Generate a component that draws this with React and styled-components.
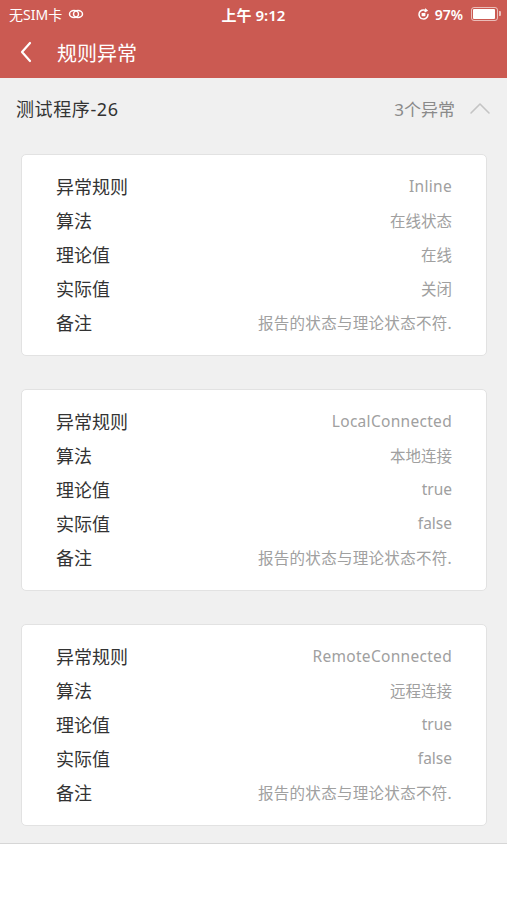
import styled, { createGlobalStyle } from 'styled-components';

const GlobalStyle = createGlobalStyle`
  html, body {
    margin: 0;
    padding: 0;
    background: #ffffff;
  }
  body {
    font-family: "Noto Sans", "Noto Sans CJK SC", sans-serif;
  }
`;

const Page = styled.div`
  width: 507px;
  min-height: 900px;
  background: #ffffff;
`;

const TopBar = styled.div`
  background: #cb5a52;
  color: #ffffff;
  height: 78px;
  display: flex;
  flex-direction: column;
`;

const StatusBar = styled.div`
  height: 28px;
  display: grid;
  grid-template-columns: 1fr auto 1fr;
  align-items: center;
  padding: 0 9px;
  font-size: 14px;
`;

const StatusLeft = styled.div`
  display: flex;
  align-items: center;
  gap: 6px;
`;

const StatusTime = styled.div`
  font-size: 15px;
  font-weight: 600;
`;

const StatusRight = styled.div`
  display: flex;
  align-items: center;
  justify-content: flex-end;
  gap: 5px;
  font-weight: 600;
`;

const Battery = styled.div`
  width: 23px;
  height: 10px;
  border: 1px solid rgba(255, 255, 255, 0.6);
  border-radius: 3px;
  padding: 1px;
  margin-left: 3px;
  position: relative;
  &::before {
    content: '';
    display: block;
    height: 100%;
    width: 97%;
    background: #fff;
    border-radius: 1px;
  }
  &::after {
    content: '';
    position: absolute;
    right: -4px;
    top: 3px;
    width: 2px;
    height: 5px;
    background: rgba(255, 255, 255, 0.6);
    border-radius: 0 1px 1px 0;
  }
`;

const NavBar = styled.div`
  flex: 1;
  display: flex;
  align-items: center;
  padding: 0 0 2px 19px;
  gap: 24px;
`;

const NavTitle = styled.div`
  font-size: 20px;
`;

const Content = styled.div`
  background: #f0f0f0;
  border-bottom: 1px solid #d6d6d6;
`;

const GroupHeader = styled.div`
  height: 60px;
  display: flex;
  align-items: center;
  padding: 0 16px;
`;

const GroupTitle = styled.div`
  flex: 1;
  font-size: 18px;
  letter-spacing: 0.6px;
  color: #333333;
`;

const GroupCount = styled.div`
  font-size: 17px;
  color: #8a8a8a;
  margin-right: 14px;
`;

const CardList = styled.div`
  display: flex;
  flex-direction: column;
  gap: 33px;
  padding: 16px 20px 17px 21px;
`;

const Card = styled.div`
  background: #ffffff;
  border: 1px solid #e2e2e2;
  border-radius: 5px;
  padding: 14px 34px 16px 34px;
`;

const Row = styled.div`
  height: 34px;
  display: flex;
  align-items: center;
  justify-content: space-between;
`;

const Label = styled.div`
  font-size: 18px;
  color: #333333;
`;

const Value = styled.div`
  font-size: 15.5px;
  letter-spacing: ${(p) => (p.$wide ? '0.3px' : '0')};
  color: #a0a0a0;
`;

const BackIcon = () => (
  <svg width="14" height="22" viewBox="0 0 14 22" fill="none">
    <path d="M11 2 L3 11 L11 20" stroke="#fff" strokeWidth="2.2" strokeLinecap="round" strokeLinejoin="round" />
  </svg>
);

const ChevronUp = () => (
  <svg width="22" height="14" viewBox="0 0 22 14" fill="none">
    <path d="M2 12 L11 3 L20 12" stroke="#c4c4c4" strokeWidth="1.6" strokeLinecap="round" strokeLinejoin="round" />
  </svg>
);

const LinkIcon = () => (
  <svg width="16" height="10" viewBox="0 0 16 10" fill="none">
    <ellipse cx="6" cy="5" rx="4.5" ry="3.5" stroke="#fff" strokeWidth="1.5" />
    <ellipse cx="10" cy="5" rx="4.5" ry="3.5" stroke="#fff" strokeWidth="1.5" />
  </svg>
);

const LockIcon = () => (
  <svg width="13" height="13" viewBox="0 0 13 13" fill="none">
    <path d="M11 6.5 A4.5 4.5 0 1 1 8.5 2.4" stroke="#fff" strokeWidth="1.5" strokeLinecap="round" />
    <path d="M8 0.8 L10 2.6 L7.6 3.8" stroke="#fff" strokeWidth="1.3" fill="none" />
    <rect x="4.6" y="5" width="3.8" height="3.2" rx="0.6" fill="#fff" />
  </svg>
);

const anomalies = [
  { rule: 'Inline', algo: '在线状态', expected: '在线', actual: '关闭' },
  { rule: 'LocalConnected', algo: '本地连接', expected: 'true', actual: 'false' },
  { rule: 'RemoteConnected', algo: '远程连接', expected: 'true', actual: 'false' },
];

export default function App() {
  return (
    <Page>
      <GlobalStyle />
      <TopBar>
        <StatusBar>
          <StatusLeft>
            <span>无SIM卡</span>
            <LinkIcon />
          </StatusLeft>
          <StatusTime>上午 9:12</StatusTime>
          <StatusRight>
            <LockIcon />
            <span>97%</span>
            <Battery />
          </StatusRight>
        </StatusBar>
        <NavBar>
          <BackIcon />
          <NavTitle>规则异常</NavTitle>
        </NavBar>
      </TopBar>
      <Content>
        <GroupHeader>
          <GroupTitle>测试程序-26</GroupTitle>
          <GroupCount>3个异常</GroupCount>
          <ChevronUp />
        </GroupHeader>
        <CardList>
          {anomalies.map((a) => (
            <Card key={a.rule}>
              <Row><Label>异常规则</Label><Value $wide>{a.rule}</Value></Row>
              <Row><Label>算法</Label><Value>{a.algo}</Value></Row>
              <Row><Label>理论值</Label><Value>{a.expected}</Value></Row>
              <Row><Label>实际值</Label><Value>{a.actual}</Value></Row>
              <Row><Label>备注</Label><Value $wide>报告的状态与理论状态不符.</Value></Row>
            </Card>
          ))}
        </CardList>
      </Content>
    </Page>
  );
}
